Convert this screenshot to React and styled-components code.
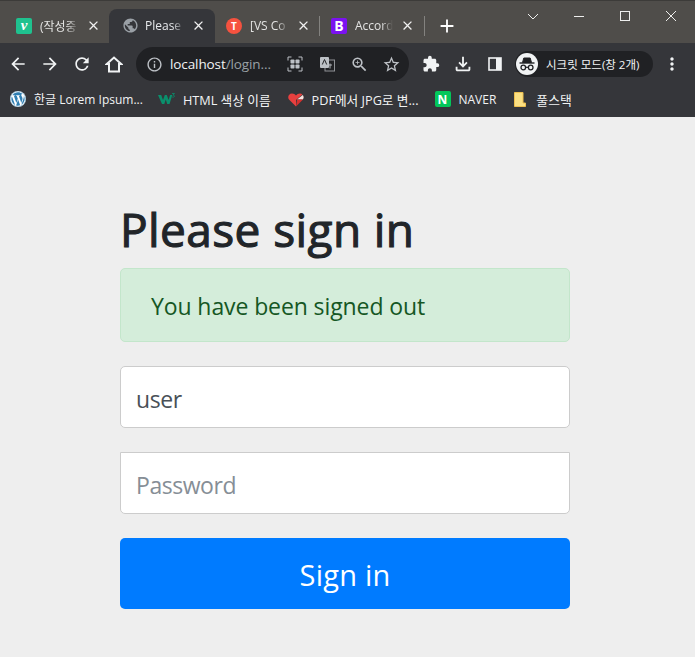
import React from 'react';
import styled, { createGlobalStyle } from 'styled-components';
import {
  MdArrowBack, MdArrowForward, MdRefresh, MdInfoOutline, MdZoomIn, MdStarBorder, MdExtension,
  MdOutlineFileDownload, MdMoreVert, MdClose, MdAdd, MdPublic,
} from 'react-icons/md';
import { FaWordpress } from 'react-icons/fa';

const GlobalStyle = createGlobalStyle`
  html, body {
    margin: 0;
    padding: 0;
    background: #eeeeee;
  }
  * {
    box-sizing: border-box;
  }
`;

const uiFont = `"Open Sans", "Noto Sans CJK KR", sans-serif`;

const Window = styled.div`
  width: 695px;
  height: 657px;
  overflow: hidden;
  display: flex;
  flex-direction: column;
  background: #eeeeee;
`;

const TabStrip = styled.div`
  height: 43px;
  flex: none;
  display: flex;
  align-items: flex-end;
  padding-left: 2px;
  background: #4f4d4a;
  border-top: 1px solid #3c3b39;
`;

const Tab = styled.div`
  width: ${(p) => p.$width}px;
  height: 34px;
  flex: none;
  display: flex;
  align-items: center;
  gap: 8px;
  margin-left: ${(p) => p.$offset || 0}px;
  padding: 0 ${(p) => p.$right || 9}px 1px ${(p) => p.$left}px;
  border-radius: 8px 8px 0 0;
  background: ${(p) => (p.$active ? '#35363a' : 'transparent')};
  color: ${(p) => (p.$active ? '#e8eaed' : '#e3e3e2')};
  font: 12px ${uiFont};
`;

const TabTitle = styled.span`
  flex: 1;
  min-width: 0;
  overflow: hidden;
  white-space: nowrap;
  -webkit-mask-image: linear-gradient(to right, #000 70%, transparent 100%);
  mask-image: linear-gradient(to right, #000 70%, transparent 100%);
`;

const TabClose = styled(MdClose)`
  flex: none;
  width: 15px;
  height: 15px;
  margin: 0 -1px;
  color: #f1f1f1;
`;

const TabGlobe = styled(MdPublic)`
  flex: none;
  width: 17px;
  height: 17px;
  margin: 0 -2px 0 0;
  color: #9aa0a6;
`;

const TabDivider = styled.div`
  width: 1px;
  height: 20px;
  flex: none;
  margin: 0 0 7px;
  background: #83827f;
`;

const NewTab = styled(MdAdd)`
  width: 22px;
  height: 22px;
  flex: none;
  margin: 0 0 6px 11px;
  color: #ffffff;
`;

const Favicon = styled.span`
  width: 16px;
  height: 16px;
  flex: none;
  display: flex;
  align-items: center;
  justify-content: center;
  border-radius: ${(p) => p.$radius || '2px'};
  background: ${(p) => p.$bg};
  color: #ffffff;
  font: ${(p) => p.$font || `bold 12px ${uiFont}`};
`;

const WindowControls = styled.div`
  margin-left: auto;
  margin-right: 1px;
  align-self: flex-start;
  display: flex;
  align-items: center;
  height: 29px;
`;

const WindowButton = styled.span`
  width: 46px;
  display: flex;
  justify-content: center;
`;

const Toolbar = styled.div`
  height: 43px;
  flex: none;
  display: flex;
  align-items: center;
  padding: 0 0 1px 2px;
  background: #35363a;
  color: #f1f3f4;
`;

const ToolIcon = styled.span`
  width: 32px;
  flex: none;
  display: flex;
  justify-content: center;
`;

const Omnibox = styled.div`
  width: 273px;
  height: 34px;
  flex: none;
  margin: 0 6px;
  padding-left: 10px;
  display: flex;
  align-items: center;
  border-radius: 17px;
  background: #202124;
  color: #bdc1c6;
`;

const Url = styled.span`
  width: 109px;
  flex: none;
  margin-left: 7px;
  font: 13.5px ${uiFont};
  letter-spacing: -0.1px;
  white-space: nowrap;
  color: #9aa0a6;

  b {
    font-weight: 400;
    color: #f1f3f4;
  }
`;

const OmniIcon = styled.span`
  width: 32px;
  flex: none;
  display: flex;
  justify-content: center;
`;

const ProfileChip = styled.div`
  width: 138px;
  height: 26px;
  flex: none;
  margin: 0 3px 0 4px;
  display: flex;
  align-items: center;
  gap: 8px;
  padding-left: 1px;
  border-radius: 13px;
  background: #202124;
  color: #f1f3f4;
  font: 11.5px ${uiFont};
  white-space: nowrap;
`;

const ProfileAvatar = styled.span`
  width: 22px;
  height: 22px;
  flex: none;
  display: flex;
  align-items: center;
  justify-content: center;
  border-radius: 50%;
  background: #f1f3f4;
`;

const BookmarkBar = styled.div`
  height: 31px;
  flex: none;
  display: flex;
  align-items: center;
  padding: 0 0 5px 10px;
  background: #35363a;
`;

const Bookmark = styled.div`
  display: flex;
  align-items: center;
  gap: ${(p) => p.$gap || 8}px;
  margin-right: ${(p) => p.$after || 16}px;
  color: #f1f3f4;
  font: ${(p) => p.$size || 12}px ${uiFont};
  white-space: nowrap;
`;

const WordpressBadge = styled.span`
  width: 16px;
  height: 16px;
  flex: none;
  display: flex;
  border-radius: 50%;
  background: #ffffff;
  color: #2f7fb3;
`;

const Page = styled.main`
  flex: 1;
  padding: 82px 125px 0 120px;
  background: #eeeeee;
  font-family: "Open Sans", sans-serif;
`;

const Heading = styled.h2`
  margin: 0 0 9px;
  font-size: 46px;
  line-height: 60px;
  font-weight: 400;
  letter-spacing: 0.4px;
  -webkit-text-stroke: 1.1px #212529;
  color: #212529;
`;

const Alert = styled.div`
  height: 74px;
  margin-bottom: 24px;
  padding: 2px 0 0 30px;
  display: flex;
  align-items: center;
  border: 1px solid #c3e6cb;
  border-radius: 5px;
  background: #d4edda;
  color: #155724;
  font-size: 23px;
  letter-spacing: -0.1px;
`;

const Field = styled.input`
  display: block;
  width: 100%;
  height: 62px;
  margin-bottom: 24px;
  padding: 4px 15px 0;
  border: 1px solid #cccccc;
  border-radius: ${(p) => (p.$squareTop ? '0 0 5px 5px' : '5px')};
  outline: none;
  background: #ffffff;
  color: #495057;
  font: 23px "Open Sans", sans-serif;
  letter-spacing: -0.45px;

  &::placeholder {
    color: #868e96;
    opacity: 1;
  }
`;

const SubmitButton = styled.button`
  display: block;
  width: 100%;
  height: 71px;
  padding: 2px 0 0;
  border: 0;
  border-radius: 5px;
  background: #007bff;
  color: #ffffff;
  font: 29px "Open Sans", sans-serif;
  letter-spacing: 0.2px;
`;

const CaptionIcon = ({ children }) => (
  <svg width="12" height="12" viewBox="0 0 12 12" fill="none" stroke="#eeeeed" strokeWidth="1">
    {children}
  </svg>
);

const HomeIcon = () => (
  <svg width="18" height="18" viewBox="0 0 18 18" fill="none" stroke="#f1f3f4" strokeWidth="2">
    <path d="M4 16.500V9H1.800L9 2.500 16.200 9H14v7.500Z" strokeLinejoin="miter" />
  </svg>
);

const IncognitoIcon = () => (
  <svg width="18" height="18" viewBox="0 0 18 18" fill="none" stroke="#202124">
    <path d="M1.500 8h15" strokeWidth="1.400" />
    <path d="M4.500 7.500 5.800 3h6.400l1.300 4.500Z" fill="#202124" />
    <circle cx="5.300" cy="12.500" r="2.300" strokeWidth="1.300" />
    <circle cx="12.700" cy="12.500" r="2.300" strokeWidth="1.300" />
    <path d="M7.600 12.300h2.800" strokeWidth="1.200" />
  </svg>
);

const W3Icon = () => (
  <svg width="17" height="12" viewBox="0 0 17 12">
    <path d="M0 2h3.200l1.800 5 1.800-5h2l1.800 5 1.500-5h2.200l-2.800 9h-2.300L7.800 6.500 6.300 11H4Z" fill="#0a8f6c" />
    <path d="M14 .5h2.500L15 2.200c1 0 1.500.4 1.500 1s-.8 1.300-2.300.8" fill="none" stroke="#0a8f6c" strokeWidth="0.8" />
  </svg>
);

const HeartIcon = () => (
  <svg width="16" height="15" viewBox="0 0 16 15">
    <path d="M8 14.500 1 7.500C-.8 5.200.7 1.500 4 1.500c1.800 0 3 .8 4 2 1-1.200 2.200-2 4-2 1 0 1.800.4 2.400 1L8 8Z" fill="#e8403f" />
    <path d="M9 7.500 14.800 3c1.200 1.500 1 3.400 0 4.500Z" fill="#f6e3df" />
    <path d="M8 14.500 15 7.500H9Z" fill="#d5302f" />
  </svg>
);

const NoteIcon = () => (
  <svg width="12" height="15" viewBox="0 0 12 15">
    <path d="M.5.500h8.500v10.500h2.500v3.500H.5Z" fill="#fbe083" stroke="#eec04f" />
  </svg>
);

const PanelIcon = () => (
  <svg width="14" height="14" viewBox="0 0 14 14" fill="none">
    <rect x="1" y="1" width="12" height="12" stroke="#f1f3f4" strokeWidth="1.600" />
    <rect x="8" y="1" width="5" height="12" fill="#f1f3f4" />
  </svg>
);

const TabSearchIcon = () => (
  <svg width="16" height="16" viewBox="0 0 16 16" fill="#bdc1c6">
    <rect x="3.500" y="3.500" width="4" height="4" rx="0.800" />
    <rect x="8.500" y="3.500" width="4" height="4" rx="0.800" />
    <rect x="3.500" y="8.500" width="4" height="4" rx="0.800" />
    <rect x="8.500" y="8.500" width="4" height="4" rx="0.800" />
    <path d="M1 4.500V1h3.500M11.500 1H15v3.500M15 11.500V15h-3.500M4.500 15H1v-3.500" fill="none" stroke="#bdc1c6" />
  </svg>
);

const TranslateIcon = () => (
  <svg width="16" height="16" viewBox="0 0 16 16">
    <rect x="6" y="4" width="9.500" height="11" fill="#202124" stroke="#8f9296" />
    <rect x="1" y="1" width="9" height="11" rx="1" fill="#bdc1c6" />
    <path d="M3.300 8.500 5.500 3.500l2.200 5" fill="none" stroke="#202124" strokeWidth="1" />
    <path d="M11 7.500v5M9.500 9h3.500" stroke="#bdc1c6" strokeWidth="0.900" />
  </svg>
);

const App = () => (
  <>
    <GlobalStyle />
    <Window>
      <TabStrip>
        <Tab $width={105} $left={14} $right={7}>
          <Favicon $bg="#1fc28f" $font={`italic bold 15px "Liberation Serif", serif`}>v</Favicon>
          <TabTitle>(작성중</TabTitle>
          <TabClose />
        </Tab>
        <Tab $active $width={106} $offset={2} $left={13} $right={10}>
          <TabGlobe />
          <TabTitle>Please</TabTitle>
          <TabClose />
        </Tab>
        <Tab $width={104} $left={11}>
          <Favicon $bg="#f6523f" $radius="50%" $font={`bold 10px ${uiFont}`}>T</Favicon>
          <TabTitle>[VS Co</TabTitle>
          <TabClose />
        </Tab>
        <TabDivider />
        <Tab $width={104} $left={11} $right={10}>
          <Favicon $bg="#7b12f0" $font={`bold 14px ${uiFont}`}>B</Favicon>
          <TabTitle>Accord</TabTitle>
          <TabClose />
        </Tab>
        <TabDivider />
        <NewTab />
        <WindowControls>
          <WindowButton><CaptionIcon><path d="M1 4l5 5 5-5" /></CaptionIcon></WindowButton>
          <WindowButton><CaptionIcon><path d="M1 6.500h10" /></CaptionIcon></WindowButton>
          <WindowButton><CaptionIcon><rect x="1.500" y="1.500" width="9" height="9" /></CaptionIcon></WindowButton>
          <WindowButton><CaptionIcon><path d="M1 1l10 10M11 1 1 11" /></CaptionIcon></WindowButton>
        </WindowControls>
      </TabStrip>

      <Toolbar>
        <ToolIcon><MdArrowBack size={20} /></ToolIcon>
        <ToolIcon><MdArrowForward size={20} /></ToolIcon>
        <ToolIcon><MdRefresh size={20} /></ToolIcon>
        <ToolIcon><HomeIcon /></ToolIcon>
        <Omnibox>
          <MdInfoOutline size={17} />
          <Url><b>localhost</b>/login...</Url>
          <OmniIcon><TabSearchIcon /></OmniIcon>
          <OmniIcon><TranslateIcon /></OmniIcon>
          <OmniIcon><MdZoomIn size={19} /></OmniIcon>
          <OmniIcon><MdStarBorder size={19} /></OmniIcon>
        </Omnibox>
        <ToolIcon><MdExtension size={18} /></ToolIcon>
        <ToolIcon><MdOutlineFileDownload size={22} /></ToolIcon>
        <ToolIcon><PanelIcon /></ToolIcon>
        <ProfileChip>
          <ProfileAvatar><IncognitoIcon /></ProfileAvatar>
          시크릿 모드(창 2개)
        </ProfileChip>
        <ToolIcon><MdMoreVert size={20} /></ToolIcon>
      </Toolbar>

      <BookmarkBar>
        <Bookmark $after={15}>
          <WordpressBadge><FaWordpress size={16} /></WordpressBadge>
          한글 Lorem Ipsum...
        </Bookmark>
        <Bookmark $after={17} $gap={8} $size={12.7}><W3Icon />HTML 색상 이름</Bookmark>
        <Bookmark $after={16} $size={12.7}><HeartIcon />PDF에서 JPG로 변...</Bookmark>
        <Bookmark $after={18}><Favicon $bg="#03c75a">N</Favicon>NAVER</Bookmark>
        <Bookmark $gap={10} $size={12.8}><NoteIcon />풀스택</Bookmark>
      </BookmarkBar>

      <Page>
        <Heading>Please sign in</Heading>
        <Alert>You have been signed out</Alert>
        <Field defaultValue="user" />
        <Field $squareTop placeholder="Password" type="password" />
        <SubmitButton>Sign in</SubmitButton>
      </Page>
    </Window>
  </>
);

export default App;
